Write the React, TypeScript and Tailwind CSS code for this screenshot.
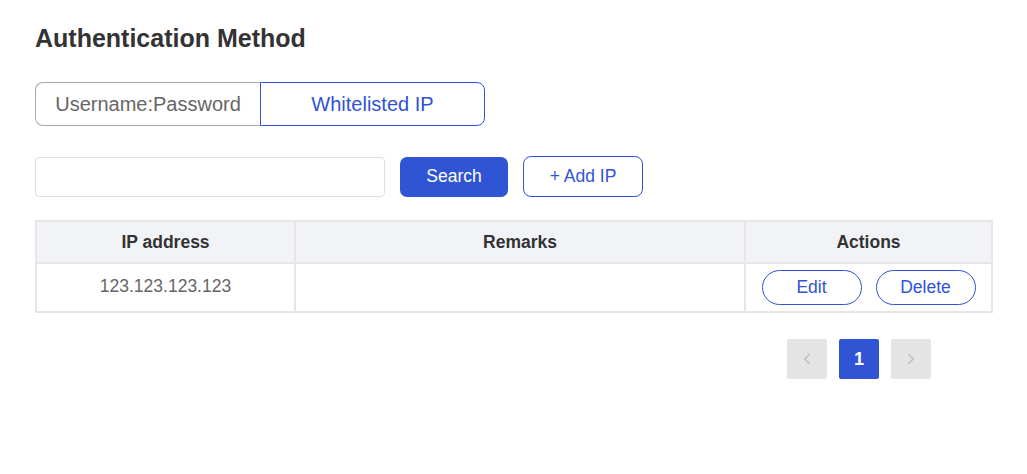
import { ChevronLeft, ChevronRight } from "lucide-react";

const rows = [{ ip: "123.123.123.123", remarks: "" }];

export default function App() {
  return (
    <div className="min-h-screen bg-white px-[35px] pt-[22px] font-['Liberation_Sans',Arial,sans-serif]">
      <h1 className="text-[25px] font-bold leading-[32px] text-[#333]">Authentication Method</h1>

      <div className="mt-[28px] flex w-[450px]">
        <button className="h-[44px] w-[225px] rounded-l-[8px] border border-r-0 border-[#aaa] text-[20px] text-[#666]">
          Username:Password
        </button>
        <button className="h-[44px] w-[225px] rounded-r-[8px] border border-[#3052d6] text-[20px] text-[#3052d6]">
          Whitelisted IP
        </button>
      </div>

      <div className="mt-[30px] flex items-center">
        <input className="h-[40px] w-[350px] rounded-[4px] border border-[#dcdfe6] px-3 text-[16px] outline-none" />
        <button className="ml-[15px] h-[40px] w-[108px] rounded-[7px] bg-[#2f55d4] text-[17.5px] text-white">
          Search
        </button>
        <button className="ml-[15px] h-[41px] w-[120px] rounded-[8px] border border-[#3052d6] text-[17.5px] text-[#3052d6]">
          + Add IP
        </button>
      </div>

      <table className="mt-[23px] w-[958px] border-collapse text-[17.5px]">
        <thead>
          <tr className="h-[42px] bg-[#f2f3f7]">
            <th className="w-[259px] border-2 border-[#e6e6e6] font-bold text-[#333]">IP address</th>
            <th className="w-[450px] border-2 border-[#e6e6e6] font-bold text-[#333]">Remarks</th>
            <th className="border-2 border-[#e6e6e6] font-bold text-[#333]">Actions</th>
          </tr>
        </thead>
        <tbody>
          {rows.map((r) => (
            <tr key={r.ip} className="h-[49px]">
              <td className="border-2 border-[#e6e6e6] pb-[2px] text-center text-[#666]">{r.ip}</td>
              <td className="border-2 border-[#e6e6e6] text-center text-[#666]">{r.remarks}</td>
              <td className="border-2 border-[#e6e6e6]">
                <div className="flex justify-center gap-[14px]">
                  <button className="h-[35px] w-[100px] rounded-full border border-[#3052d6] text-[#3052d6]">Edit</button>
                  <button className="h-[35px] w-[100px] rounded-full border border-[#3052d6] text-[#3052d6]">Delete</button>
                </div>
              </td>
            </tr>
          ))}
        </tbody>
      </table>

      <div className="mt-[26px] flex w-[958px] justify-end gap-[12px] pr-[62px]">
        <button className="flex h-[40px] w-[40px] items-center justify-center rounded-[2px] bg-[#e4e4e4] text-[#b8bcc6]">
          <ChevronLeft className="h-[18px] w-[18px]" strokeWidth={1.75} />
        </button>
        <button className="flex h-[40px] w-[40px] items-center justify-center rounded-[2px] bg-[#2f55d4] text-[18px] font-bold text-white">
          1
        </button>
        <button className="flex h-[40px] w-[40px] items-center justify-center rounded-[2px] bg-[#e4e4e4] text-[#b8bcc6]">
          <ChevronRight className="h-[18px] w-[18px]" strokeWidth={1.75} />
        </button>
      </div>
    </div>
  );
}
